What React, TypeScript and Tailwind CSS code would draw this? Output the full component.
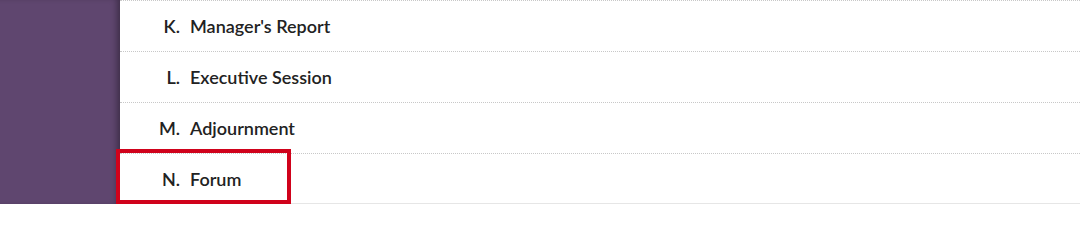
const items = [
  { letter: 'K.', title: "Manager's Report" },
  { letter: 'L.', title: 'Executive Session' },
  { letter: 'M.', title: 'Adjournment' },
  { letter: 'N.', title: 'Forum', highlight: true },
];

export default function App() {
  return (
    <div className="flex h-[204px] w-[1080px] overflow-hidden bg-white font-['Lato','Liberation_Sans',sans-serif] text-[#222]">
      <div className="w-[120px] shrink-0 bg-[#5f466f] shadow-[inset_-6px_0_6px_-3px_rgba(0,0,0,0.35)]" />
      <div className="flex-1 border-b border-[#e6e6e6]">
        {items.map(item => (
          <div
            key={item.letter}
            className="relative flex h-[51px] items-center border-t border-dotted border-[#c8c8c8] text-[18px] font-semibold"
          >
            <span className="w-[60px] text-right">{item.letter}</span>
            <span className="ml-[10px]">{item.title}</span>
            {item.highlight && (
              <div className="absolute left-[-4px] top-[-5px] h-[55px] w-[175px] border-4 border-[#d0021b]" />
            )}
          </div>
        ))}
      </div>
    </div>
  );
}
